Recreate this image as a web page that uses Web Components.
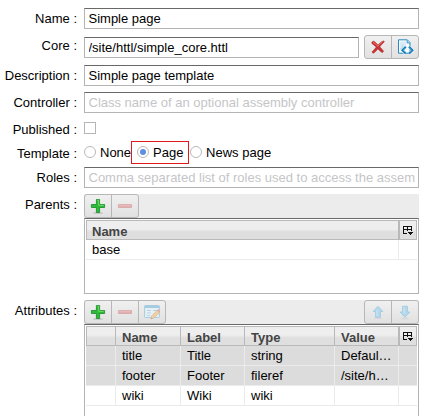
<!DOCTYPE html>
<html lang="en">
<head>
<meta charset="utf-8">
<title>Page editor</title>
<style>
body{margin:0;width:427px;height:416px;overflow:hidden;background:#fff;color:#000;font:13px/15px "Liberation Sans",Arial,sans-serif}
</style>
</head>
<body>
<page-form>
  <form-row label="Name"><text-field value="Simple page"></text-field></form-row>
  <form-row label="Core">
    <text-field value="/site/httl/simple_core.httl" style="margin:2px 5px 0 0"></text-field>
    <button-group><ui-icon name="cross"></ui-icon><ui-icon name="code"></ui-icon></button-group>
  </form-row>
  <form-row label="Description"><text-field value="Simple page template"></text-field></form-row>
  <form-row label="Controller"><text-field placeholder="Class name of an optional assembly controller"></text-field></form-row>
  <form-row label="Published" style="height:16px"><check-box></check-box></form-row>
  <form-row label="Template" style="height:20px;--label-top:5px">
    <radio-option>None</radio-option><radio-option checked focused>Page</radio-option><radio-option>News page</radio-option>
  </form-row>
  <form-row label="Roles"><text-field placeholder="Comma separated list of roles used to access the assem"></text-field></form-row>
  <form-row label="Parents">
    <table-panel style="height:100px;--line:#6c676c">
      <button-group slot="left"><ui-icon name="plus"></ui-icon><ui-icon name="minus"></ui-icon></button-group>
      <data-grid columns="313" heads="Name" rows="base"></data-grid>
    </table-panel>
  </form-row>
  <form-row label="Attributes" class="last">
    <table-panel style="height:116px;--line:#666a64;--foot:0">
      <button-group slot="left"><ui-icon name="plus"></ui-icon><ui-icon name="minus"></ui-icon><ui-icon name="edit"></ui-icon></button-group>
      <button-group slot="right"><ui-icon name="up"></ui-icon><ui-icon name="down"></ui-icon></button-group>
      <data-grid columns="30,65,64,90,64" heads=",Name,Label,Type,Value" rows=",title,Title,string,Defaul…|,footer,Footer,fileref,/site/h…|,wiki,Wiki,wiki," shaded="2"></data-grid>
    </table-panel>
  </form-row>
</page-form>
<script>
class Base extends HTMLElement{
  constructor(){super();this.attachShadow({mode:'open'})}
  connectedCallback(){this.shadowRoot.innerHTML='<style>*{box-sizing:border-box}'+this.css()+'</style>'+this.html()}
  at(n){return this.getAttribute(n)||''}
}
customElements.define('page-form',class extends Base{
  css(){return ':host{display:flex;flex-direction:column;gap:6px;padding:8px 8px 0 0;box-sizing:border-box}'}
  html(){return '<slot></slot>'}
});
customElements.define('form-row',class extends Base{
  css(){return ':host{display:flex;align-items:flex-start}label{width:77px;text-align:right;padding-top:var(--label-top,3px);white-space:nowrap;flex:none}.f{display:flex;flex:1;min-width:0;margin-left:7px;align-items:flex-start}'}
  html(){return `<label>${this.at('label')} :</label><div class="f"><slot></slot></div>`}
});
customElements.define('text-field',class extends Base{
  css(){return ':host{display:block;flex:1;min-width:0;height:21px;box-sizing:border-box;border:1px solid #b4b4b4;border-top-color:#686868;background:#fff;padding:2px 3px 0 3.5px}div{overflow:hidden;white-space:nowrap;height:17px}.p{color:#c5c5c8}'}
  html(){return this.hasAttribute('value')?`<div>${this.at('value')}</div>`:`<div class="p">${this.at('placeholder')}</div>`}
});
customElements.define('check-box',class extends Base{
  css(){return ':host{display:block;width:12px;height:12px;box-sizing:border-box;border:1px solid #b5b5b5;background:#fff;margin-top:3px}'}
  html(){return ''}
});
customElements.define('radio-option',class extends Base{
  css(){return `:host{display:flex;align-items:flex-start;gap:4px;height:20px;padding-top:4px;box-sizing:border-box;white-space:nowrap}
  :host([focused]){border:1px solid #e01b1b;height:23px;width:58px;padding:3px 0 0 5px;margin-right:1px}
  i{width:12px;height:12px;margin-top:1px;border:1px solid #b9b9b9;border-radius:50%;display:grid;place-items:center;background:#fff;flex:none}
  :host([checked]) i::after{content:"";width:6px;height:6px;border-radius:50%;background:#5e8ee0}`}
  html(){return '<i></i><slot></slot>'}
});
customElements.define('button-group',class extends Base{
  css(){return `:host{display:flex;height:24px;box-sizing:border-box;border:1px solid #b7b7b7;border-radius:3px;background:linear-gradient(#f0f0f0,#e1e1e1);flex:none}
  ::slotted(*){width:26px;height:22px}::slotted(:not(:first-child)){width:27px!important;border-left:1px solid #b7b7b7}`}
  html(){return '<slot></slot>'}
});
const ICONS={
  plus:`<ellipse cx="8" cy="15" rx="5" ry="1" fill="#bbb" opacity=".7"/><path d="M6.4 1.5h3.2v5h5v3h-5v5H6.4v-5h-5v-3h5z" fill="#2bbb35" stroke="#178a2a" stroke-width=".8"/><path d="M7.2 2.3h1.5v5h5" fill="none" stroke="#7be071" stroke-width=".9"/>`,
  minus:`<rect x="1.4" y="6.5" width="13.2" height="3" rx=".3" fill="#e2b0b0" stroke="#d6a2a4" stroke-width=".8"/><path d="M2 7.2h12" stroke="#ecc6c6" stroke-width=".7"/>`,
  cross:`<path d="M1.9 3.2Q3.5 1.4 5 3.1L8 6.1Q10.7 2.8 13.3 2L14.4 2.7Q11.5 5.3 9.7 7.8L13.6 12.2L12.3 13.6Q10.3 12.6 7.9 9.8Q5.4 13 3.6 14.1Q2.2 14.2 2.2 12.8Q4.3 10.8 6.3 8.1Q3.6 5.5 1.9 4.5z" fill="#cc3232" stroke="#a51f24" stroke-width=".6"/><path d="M3 3.4Q5 4 7.9 7.2Q10 4.3 12.4 3" fill="none" stroke="#e78279" stroke-width=".9"/>`,
  code:`<path d="M1.5.8h8.8L13 3.6v10.6H1.5z" fill="#f5fbfe" stroke="#288bc0"/><path d="M3 2.4h6v5L3 12z" fill="#dcecf6"/><path d="M10.1 1v3H13" fill="#b4d9ed" stroke="#288bc0" stroke-width=".8"/><path d="M5.4 5.5v4.2H3.2" fill="none" stroke="#b1cedf" stroke-width=".8"/><path d="M8.8 7.8L5.4 11.2l3.4 3.4M12 7.8l3.4 3.4-3.4 3.4" fill="none" stroke="#fff" stroke-width="3"/><path d="M8.8 7.8L5.4 11.2l3.4 3.4M12 7.8l3.4 3.4-3.4 3.4" fill="none" stroke="#1679b5" stroke-width="2.1"/><path d="M8.6 8.6L6.2 11.2l2.4 2.4M12.2 8.6l2.4 2.6-2.4 2.4" fill="none" stroke="#6ab8df" stroke-width=".6"/>`,
  edit:`<rect x=".6" y="1.5" width="14.8" height="12" rx=".7" fill="#e7f0f4" stroke="#a9cbdc"/><path d="M1 3h14" stroke="#a4cce1" stroke-width="2"/><path d="M3 6.5h4M3 9h4M3 11.5h3M9 6.5h4" stroke="#b3d3e1"/><path d="M7 15l.7-3.2 6-6 2.3 2.2-6 6z" fill="#f0cfa3" stroke="#d4b99c" stroke-width=".7"/><path d="M13.1 6.3l1.2-1.1 2 1.9-1.1 1.3z" fill="#e1aaa5"/><path d="M7 15l.4-1.8 1.4 1.3z" fill="#aaa"/>`,
  up:`<ellipse cx="8" cy="14.2" rx="4" ry=".9" fill="#ccc" opacity=".5"/><path d="M8 2.3l4.8 5.2h-2.4v5.7H5.6V7.5H3.2z" fill="#b4d9ec" stroke="#9ecbe2" stroke-width=".9"/><path d="M7 6v6" stroke="#cfe8f4"/>`,
  down:`<ellipse cx="8" cy="14.5" rx="4" ry=".9" fill="#ccc" opacity=".5"/><path d="M8 13.2l4.8-5.2h-2.4V2.3H5.6V8H3.2z" fill="#b4d9ec" stroke="#9ecbe2" stroke-width=".9"/><path d="M7 3v6" stroke="#cfe8f4"/>`,
  columns:`<path d="M0 0h9v1H0zM0 1h1v7H0zM1 2h8v1H1zM4 1h1v4H4zM8 1h1v4H8zM1 7h3v1H1zM5 6h5v1H5zM6 7h3v1H6zM7 8h1v1H7z" fill="#111" shape-rendering="crispEdges"/>`
};
ICONS.columns='<path d="M0 0h9v1H0zM0 1h1v7H0zM1 3h8v1H1zM4 1h1v4H4zM8 1h1v4H8zM1 7h3v1H1zM5 6h5v1H5zM6 7h3v1H6zM7 8h1v1H7z" fill="#111" shape-rendering="crispEdges"/>';
customElements.define('ui-icon',class extends Base{
  css(){return ':host{display:grid;place-items:center;box-sizing:border-box}:host([name=columns]){place-items:start center}svg{display:block;overflow:visible}'}
  html(){const n=this.at('name'),s=n==='columns'?10:16;return `<svg width="${s}" height="${s}" viewBox="0 0 ${s} ${s}">${ICONS[n]}</svg>`}
});
customElements.define('table-panel',class extends Base{
  css(){return `:host{display:flex;flex-direction:column;flex:1;min-width:0}.bar{display:flex;justify-content:space-between;height:24px;background:#ececec;flex:none}
  .body{flex:1;border:1px solid #b4b4b4;border-top-color:var(--line);border-bottom-width:var(--foot,1px);padding:1px;background:#fff}`}
  html(){return '<div class="bar"><slot name="left"></slot><slot name="right"></slot></div><div class="body"><slot></slot></div>'}
});
customElements.define('data-grid',class extends Base{
  css(){return `:host{display:block}.r{display:grid;grid-template-columns:${this.at('columns').split(',').map(n=>n+'px').join(' ')} 18px;height:20px}
  .r>*{padding:2px 4px 0 6px;overflow:hidden;white-space:nowrap;text-overflow:ellipsis;border-right:1px solid #ebebeb;border-bottom:1px solid #ebebeb}
  .r>:last-child{border-right:0}.s>*{background:#dcdcdc}
  .h{font-weight:bold;color:#444}.h>*{background:linear-gradient(#eee,#eee 45%,#dfdfdf 60%,#dfdfdf);border:1px solid #b9b9b9;border-left:0;padding:3px 0 0 6px}
  .h>:first-child{border-left:1px solid #b9b9b9;padding-left:5px}.h>:last-child{border-right:1px solid #b9b9b9;border-left:1px solid #b9b9b9;padding:5px 0 0}`}
  html(){
    const shaded=+this.at('shaded');
    return '<div class="r h">'+this.at('heads').split(',').map(t=>`<div>${t}</div>`).join('')+'<ui-icon name="columns"></ui-icon></div>'+
    this.at('rows').split('|').map((r,i)=>`<div class="r${i<shaded?' s':''}">`+r.split(',').map(t=>`<div>${t}</div>`).join('')+'<div></div></div>').join('')
  }
});
</script>
</body>
</html>
